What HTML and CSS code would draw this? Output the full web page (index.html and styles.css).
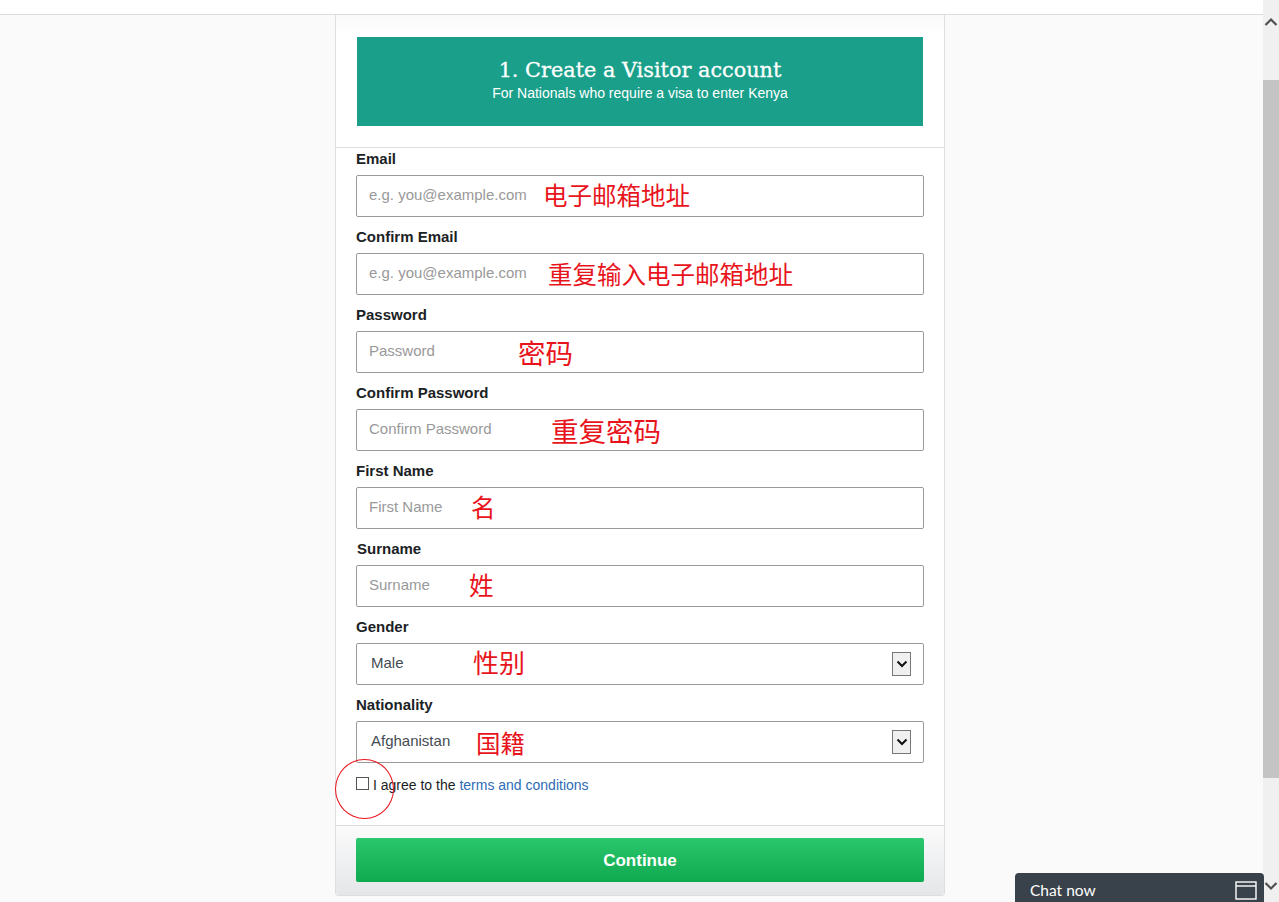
FILE: index.html
```html
<!DOCTYPE html>
<html lang="en">
<head>
<meta charset="utf-8">
<title>Create a Visitor account</title>
<link rel="stylesheet" href="styles.css">
</head>
<body>
<div class="page">
  <div class="topbar"></div>
  <main class="card">
    <header class="card-head">
      <div class="banner">
        <h1 class="banner-title">1. Create a Visitor account</h1>
        <p class="banner-sub">For Nationals who require a visa to enter Kenya</p>
      </div>
    </header>
    <form class="form">
      <div class="field">
        <label class="label">Email</label>
        <div class="control"><input class="input" placeholder="e.g. you@example.com"><span class="note note-email">电子邮箱地址</span></div>
      </div>
      <div class="field">
        <label class="label">Confirm Email</label>
        <div class="control"><input class="input" placeholder="e.g. you@example.com"><span class="note note-confirm-email">重复输入电子邮箱地址</span></div>
      </div>
      <div class="field">
        <label class="label">Password</label>
        <div class="control"><input class="input" placeholder="Password"><span class="note note-wide note-password">密码</span></div>
      </div>
      <div class="field">
        <label class="label">Confirm Password</label>
        <div class="control"><input class="input" placeholder="Confirm Password"><span class="note note-wide note-confirm-password">重复密码</span></div>
      </div>
      <div class="field">
        <label class="label">First Name</label>
        <div class="control"><input class="input" placeholder="First Name"><span class="note note-first">名</span></div>
      </div>
      <div class="field">
        <label class="label label-shift">Surname</label>
        <div class="control"><input class="input" placeholder="Surname"><span class="note note-surname">姓</span></div>
      </div>
      <div class="field">
        <label class="label">Gender</label>
        <div class="control select"><span class="select-value">Male</span>
          <span class="select-arrow"><svg width="12" height="8" viewBox="0 0 12 8"><path d="M1.5 1.5 6 6l4.5-4.5" fill="none" stroke="#111" stroke-width="2"/></svg></span>
          <span class="note note-gender">性别</span></div>
      </div>
      <div class="field field-last">
        <label class="label">Nationality</label>
        <div class="control select"><span class="select-value">Afghanistan</span>
          <span class="select-arrow"><svg width="12" height="8" viewBox="0 0 12 8"><path d="M1.5 1.5 6 6l4.5-4.5" fill="none" stroke="#111" stroke-width="2"/></svg></span>
          <span class="note note-nation">国籍</span></div>
      </div>
      <div class="agree">
        <span class="checkbox"></span>
        <span class="agree-text">I agree to the <a class="link" href="#">terms and conditions</a></span>
        <span class="circle"></span>
      </div>
    </form>
    <footer class="card-foot">
      <button class="continue" type="button">Continue</button>
    </footer>
  </main>
  <div class="chat">
    <span class="chat-label">Chat now</span>
    <svg class="chat-icon" width="22" height="19" viewBox="0 0 22 19"><rect x="1" y="1" width="20" height="17" fill="none" stroke="#fff" stroke-width="1.4"/><path d="M1 5h20" stroke="#fff" stroke-width="1.4"/></svg>
  </div>
</div>
<aside class="scrollbar">
  <svg class="scroll-arrow" width="16" height="17" viewBox="0 0 16 17"><path d="M2.5 11 8 5.5l5.500 5.500" fill="none" stroke="#505050" stroke-width="2.200"/></svg>
  <div class="track"><div class="thumb"></div></div>
  <svg class="scroll-arrow" width="16" height="17" viewBox="0 0 16 17"><path d="M2.500 6 8 11.500 13.500 6" fill="none" stroke="#505050" stroke-width="2.200"/></svg>
</aside>
</body>
</html>
```
FILE: styles.css
```css
* { box-sizing: border-box; }
html, body { margin: 0; height: 902px; overflow: hidden; }
body {
  display: flex;
  background: #fafafa;
  font-family: "Liberation Sans", Arial, sans-serif;
  color: #1b2224;
}
.page { position: relative; width: 1263px; height: 902px; overflow: visible; }
.topbar { height: 15px; background: #fff; border-bottom: 1px solid #dcdcdc; }
.card {
  width: 610px;
  margin-left: 335px;
  background: #fff;
  border: 1px solid #dedede;
  border-top: 0;
  border-radius: 0 0 4px 4px;
  height: 881px;
  display: flex;
  flex-direction: column;
}
.card-head {
  padding: 22px 21px 21px 21px;
  border-bottom: 1px solid #dedede;
  background: linear-gradient(#f9f9f9, #fff 20px);
}
.banner {
  height: 89px;
  background: #1a9f8a;
  color: #fff;
  text-align: center;
  padding-top: 20px;
}
.banner-title {
  margin: 0;
  font-family: "DejaVu Serif", serif;
  font-weight: 400;
  font-size: 20.800px;
  line-height: 27px;
  -webkit-text-stroke: 0.3px #fff;
}
.banner-sub { margin: -1px 0 0; font-size: 14px; line-height: 20px; }
.form { flex: 1; padding: 0 20px; }
.field { height: 78px; }
.field-last { height: 69px; }
.label {
  display: block;
  height: 27px;
  padding-top: 3px;
  font-size: 15px;
  line-height: 16px;
  font-weight: 700;
}
.label-shift { padding-left: 1px; }
.control {
  position: relative;
  height: 42px;
  border: 1px solid #9a9a9a;
  border-radius: 2px;
  background: #fff;
  display: flex;
  align-items: center;
}
.input {
  flex: 1;
  height: 100%;
  border: 0;
  outline: 0;
  background: transparent;
  padding: 0 12px;
  margin-top: -3px;
  font: 15px "Liberation Sans", Arial, sans-serif;
}
.input::placeholder { color: #999; opacity: 1; }
.select { justify-content: space-between; padding: 0 12px 0 14px; }
.select-value { font-size: 15px; color: #444c52; margin-top: -3px; }
.select-arrow {
  width: 19px;
  height: 24px;
  border: 1px solid #777;
  background: #f0f0f0;
  display: flex;
  align-items: center;
  justify-content: center;
}
.note {
  position: absolute;
  top: 3px;
  font-family: "Noto Sans CJK SC", sans-serif;
  font-size: 24.500px;
  line-height: 32px;
  color: #e8141c;
  white-space: nowrap;
}
.note-wide { top: 4px; font-size: 27.500px; }
.note-email { left: 186px; }
.note-confirm-email { left: 191px; top: 4px; }
.note-password { left: 161px; }
.note-confirm-password { left: 194px; }
.note-first { left: 114px; }
.note-surname { left: 112px; }
.note-gender { left: 116px; top: 2px; font-size: 26px; }
.note-nation { left: 119px; top: 5px; }
.agree {
  position: relative;
  display: flex;
  align-items: flex-start;
  gap: 4px;
}
.checkbox {
  width: 13px;
  height: 13px;
  margin-top: 14px;
  border: 1px solid #555;
  background: #fff;
}
.agree-text { margin-top: 14px; font-size: 14px; line-height: 17px; }
.link { color: #2d6cb5; text-decoration: none; }
.circle {
  position: absolute;
  left: -21px;
  top: -4px;
  width: 59px;
  height: 60px;
  border: 1px solid #e8141c;
  border-radius: 50%;
}
.card-foot {
  height: 70px;
  padding: 12px 20px 0;
  border-top: 1px solid #dedede;
  border-radius: 0 0 4px 4px;
  background: linear-gradient(#fbfbfb, #e4e6e8);
}
.continue {
  display: block;
  width: 100%;
  height: 44px;
  padding: 2px 0 0;
  border: 0;
  border-radius: 2px;
  background: linear-gradient(#2bc76c, #0fa94f);
  color: #fff;
  font: 700 17px "Liberation Sans", Arial, sans-serif;
}
.chat {
  position: absolute;
  left: 1015px;
  bottom: 0;
  width: 249px;
  height: 29px;
  padding: 5px 7px 0 15px;
  display: flex;
  justify-content: space-between;
  align-items: flex-start;
  border-radius: 4px 4px 0 0;
  background: #39424a;
  color: #fff;
  font: 15.500px/24px Lato, sans-serif;
}
.chat-icon { margin-top: 3px; }
.scrollbar {
  width: 16px;
  height: 902px;
  flex: none;
  background: #f0f0f0;
  display: flex;
  flex-direction: column;
}
.scroll-arrow { display: block; flex: none; margin-top: 14px; }
.scroll-arrow:last-child { margin-top: 0; margin-bottom: 8px; }
.track { flex: 1; padding-top: 49px; }
.thumb { height: 698px; background: #c4c4c4; }
```
